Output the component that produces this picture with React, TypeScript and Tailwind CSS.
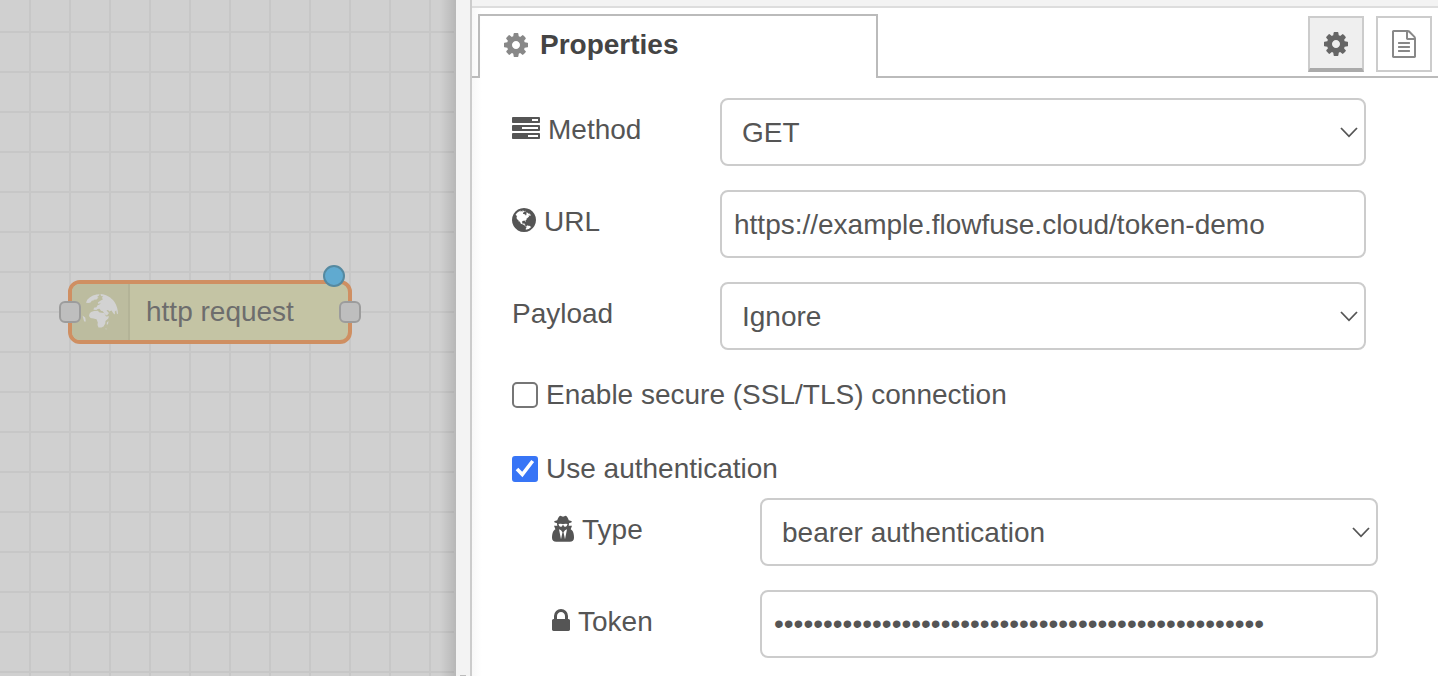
import { useState, type ReactNode } from "react";

const COG =
  "M1024 896q0-106-75-181t-181-75-181 75-75 181 75 181 181 75 181-75 75-181zm512-109v222q0 12-8 23t-20 13l-185 28q-19 54-39 91 35 50 107 138 10 12 10 25t-9 23q-27 37-99 108t-94 71q-12 0-26-9l-138-108q-44 23-91 38-16 136-29 186-7 28-36 28h-222q-14 0-24.5-8.5t-11.5-21.5l-28-184q-49-16-90-37l-141 107q-10 9-25 9-14 0-25-11-126-114-165-168-7-10-7-23 0-12 8-23 15-21 51-66.5t54-70.5q-27-50-41-99l-183-27q-13-2-21-12.5t-8-23.5v-222q0-12 8-23t19-13l186-28q14-46 39-92-40-57-107-138-10-12-10-24 0-10 9-23 26-36 98.5-107.5t94.5-71.5q13 0 26 10l138 107q44-23 91-38 16-136 29-186 7-28 36-28h222q14 0 24.5 8.5t11.5 21.5l28 184q49 16 90 37l142-107q9-9 24-9 13 0 25 10 129 119 165 170 7 8 7 22 0 12-8 23-15 21-51 66.5t-54 70.5q26 50 41 98l183 28q13 2 21 12.5t8 23.5z";

const FILE =
  "M1596 380q28 28 48 76t20 88v1152q0 40-28 68t-68 28h-1344q-40 0-68-28t-28-68v-1600q0-40 28-68t68-28h896q40 0 88 20t76 48zm-444-244v376h376q-10-29-22-41l-313-313q-12-12-41-22zm384 1528v-1024h-416q-40 0-68-28t-28-68v-416h-768v1536h1280zm-1024-864q0-14 9-23t23-9h704q14 0 23 9t9 23v64q0 14-9 23t-23 9h-704q-14 0-23-9t-9-23v-64zm736 224q14 0 23 9t9 23v64q0 14-9 23t-23 9h-704q-14 0-23-9t-9-23v-64q0-14 9-23t23-9h704zm0 256q14 0 23 9t9 23v64q0 14-9 23t-23 9h-704q-14 0-23-9t-9-23v-64q0-14 9-23t23-9h704z";

const TASKS =
  "M1024 1408h640v-128h-640v128zm-384-512h1024v-128h-1024v128zm640-512h384v-128h-384v128zm512 832v256q0 26-19 45t-45 19h-1664q-26 0-45-19t-19-45v-256q0-26 19-45t45-19h1664q26 0 45 19t19 45zm0-512v256q0 26-19 45t-45 19h-1664q-26 0-45-19t-19-45v-256q0-26 19-45t45-19h1664q26 0 45 19t19 45zm0-512v256q0 26-19 45t-45 19h-1664q-26 0-45-19t-19-45v-256q0-26 19-45t45-19h1664q26 0 45 19t19 45z";

const GLOBE =
  "M896 128q209 0 385.5 103t279.5 279.5 103 385.5-103 385.5-279.5 279.5-385.5 103-385.5-103-279.5-279.5-103-385.5 103-385.5 279.5-279.5 385.5-103zm274 521q-2 1-9.5 9.5t-13.5 9.5q2 0 4.5-5t5-11 3.5-7q6-7 22-15 14-6 52-12 34-8 51 11-2-2 9.5-13t14.5-12q3-2 15-4.5t15-7.5l2-22q-12 1-17.5-7t-6.5-21q0 2-6 8 0-7-4.5-8t-11.5 1-9 1q-10-3-15-7.5t-8-16.5-4-15q-2-5-9.5-11t-9.5-10q-1-2-2.5-5.5t-3-6.5-4-5.5-5.5-2.5-7 5-7.5 10-4.5 5q-3-2-6-1.5t-4.5 1-4.5 3-5 3.5q-3 2-8.5 3t-8.5 2q15-5-1-11-10-4-16-3 9-4 7.5-12t-8.5-14h5q-1-4-8.5-8.5t-17.5-8.5-13-6q-8-5-34-9.5t-33-.5q-5 6-4.5 10.5t4 14 3.5 12.5q1 6-5.5 13t-6.5 12q0 7 14 15.5t10 21.5q-3 8-16 16t-16 12q-5 8-1.5 18.5t10.5 16.5q2 2 1.5 4t-3.5 4.5-5.5 4-6.5 3.5l-3 2q-11 5-20.5-6t-13.5-26q-7-25-16-30-23-8-29 1-5-13-41-26-25-9-58-4 6-1 0-15-7-15-19-12 3-6 4-17.5t1-13.5q3-13 12-23 1-1 7-8.5t9.5-13.5.5-6q35 4 50-11 5-5 11.5-17t10.5-17q9-6 14-5.5t14.5 5.5 14.5 5q14 1 15.5-11t-7.5-20q12 1 3-17-4-7-8-9-12-4-27 5-8 4 2 8-1-1-9.5 10.5t-16.5 17.5-16-5q-1-1-5.5-13.5t-9.5-13.5q-8 0-16 15 3-8-11-15t-24-8q19-12-8-27-7-4-20.5-5t-19.5 4q-5 7-5.5 11.5t5 8 10.5 5.5 11.5 4 8.5 3q14 10 8 14-2 1-8.5 3.5t-11.5 4.5-6 4q-3 4 0 14t-2 14q-5-5-9-17.5t-7-16.5q7 9-25 6l-10-1q-4 0-16 2t-20.5 1-13.5-8q-4-8 0-20 1-4 4-2-4-3-11-9.5t-10-8.5q-46 15-94 41 6 1 12-1 5-2 13-6.5t10-5.5q34-14 42-7l5-5q14 16 20 25-7-4-30-1-20 6-22 12 7 12 5 18-4-3-11.5-10t-14.5-11-15-5q-16 0-22 1-146 80-235 222 7 7 12 8 4 1 5 9t2.5 11 11.5-3q9 8 3 19 1-1 44 27 19 17 21 21 3 11-10 18-1-2-9-9t-9-4q-3 5 .5 18.5t10.5 12.5q-7 0-9.5 16t-2.5 35.5-1 23.5l2 1q-3 12 5.5 34.5t21.5 19.5q-13 3 20 43 6 8 8 9 3 2 12 7.5t15 10 10 10.5q4 5 10 22.5t14 23.5q-2 6 9.5 20t10.5 23q-1 0-2.5 1t-2.5 1q3 7 15.5 14t15.5 13q1 3 2 10t3 11 8 2q2-20-24-62-15-25-17-29-3-5-5.5-15.5t-4.5-14.5q2 0 6 1.5t8.5 3.5 7.5 4 2 3q-3 7 2 17.5t12 18.5 17 19 12 13q6 6 14 19.5t0 13.5q9 0 20 10.5t17 19.5q5 8 8 26t5 24q2 7 8.5 13.5t12.5 9.5l16 8 13 7q5 2 18.5 10.5t21.5 11.5q10 4 16 4t14.5-2.5 13.5-3.5q15-2 29 15t21 21q36 19 55 11-2 1 .5 7.5t8 15.5 9 14.5 5.5 8.5q5 6 18 15t18 15q6-4 7-9-3 8 7 20t18 10q14-3 14-32-31 15-49-18 0-1-2.5-5.5t-4-8.5-2.5-8.5 0-7.5 5-3q9 0 10-3.5t-2-12.5-4-13q-1-8-11-20t-12-15q-5 9-16 8t-16-9q0 1-1.5 5.5t-1.5 6.5q-13 0-15-1 1-3 2.5-17.5t3.5-22.5q1-4 5.5-12t7.5-14.5 4-12.5-4.5-9.5-17.5-2.5q-19 1-26 20-1 3-3 10.5t-5 11.5-9 7q-7 3-24 2t-24-5q-13-8-22.5-29t-9.5-37q0-10 2.5-26.5t3-25-5.5-24.5q3-2 9-9.5t10-10.5q2-1 4.5-1.5t4.5 0 4-1.5 3-6q-1-1-4-3-3-3-4-3 7 3 28.5-1.5t27.5 1.5q15 11 22-2 0-1-2.5-9.5t-.5-13.5q5 27 29 9 3 3 15.5 5t17.5 5q3 2 7 5.5t5.5 4.5 5-.5 8.5-6.5q10 14 12 24 11 40 19 44 7 3 11 2t4.5-9.5 0-14-1.5-12.5l-1-8v-18l-1-8q-15-3-18.5-12t1.5-18.5 15-18.5q1-1 8-3.5t15.5-6.5 12.5-8q21-19 15-35 7 0 11-9-1 0-5-3t-7.5-5-4.5-2q9-5 2-16 5-3 7.5-11t7.5-10q9 12 21 2 8-8 1-16 5-7 20.5-10.5t18.5-9.5q7 2 8-2t1-12 3-12q4-5 15-9t13-5l17-11q3-4 0-4 18 2 31-11 10-11-6-20 3-6-3-9.5t-15-5.5q3-1 11.5-.5t10.5-1.5q15-10-7-16-17-5-43 12zm-163 877q206-36 351-189-3-3-12.5-4.5t-12.5-3.5q-18-7-24-8 1-7-2.5-13t-8-9-12.5-8-11-7q-2-2-7-6t-7-5.5-7.5-4.5-8.5-2-10 1l-3 1q-3 1-5.5 2.5t-5.5 3-4 3 0 2.5q-21-17-36-22-5-1-11-5.5t-10.5-7-10-1.5-11.5 7q-5 5-6 15t-2 13q-7-5 0-17.5t2-18.5q-3-6-10.5-4.5t-12 4.5-11.5 8.5-9 6.5-8.5 5.5-8.5 7.5q-3 4-6 12t-5 11q-2-4-11.5-6.5t-9.5-5.5q2 10 4 35t5 38q7 31-12 48-27 25-29 40-4 22 12 26 0 7-8 20.5t-7 21.5q0 6 2 16z";

const SECRET =
  "M704 1536l96-448-96-128-128-64zm256 0l128-640-128 64-96 128zm160-970q-2-4-4-6-10-8-96-8-70 0-167 19-7 2-21 2t-21-2q-97-19-167-19-86 0-96 8-2 2-4 6 2 18 4 27 2 3 7.5 6.5t7.5 10.5q2 4 7.5 20.5t7 20.5 7.5 17 8.5 17 9 14 12 13.5 14 9.5 17.5 8 20.5 4 24.5 2q36 0 59-12.5t32.5-30 14.5-34.5 11.5-29.5 17.5-12.5h12q11 0 17.5 12.5t11.5 29.5 14.5 34.5 32.5 30 59 12.5q13 0 24.5-2t20.5-4 17.5-8 14-9.5 12-13.5 9-14 8.5-17 7.5-17 7-20.5 7.5-20.5q2-7 7.5-10.5t7.5-6.5q2-9 4-27zm416 879q0 121-73 190t-194 69h-874q-121 0-194-69t-73-190q0-61 4.5-118t19-125.5 37.5-123.5 63.5-103.5 93.5-74.5l-90-220h214q-22-64-22-128 0-12 2-32-194-40-194-96 0-57 210-99 17-62 51.5-134t70.5-114q32-37 76-37 30 0 84 31t84 31 84-31 84-31q44 0 76 37 36 42 70.5 114t51.5 134q210 42 210 99 0 56-194 96 7 81-20 160h214l-82 225q63 33 107.5 96.5t65.5 143.5 29 151.5 8 148.5z";

const LOCK =
  "M640 768h512v-192q0-106-75-181t-181-75-181 75-75 181v192zm832 96v576q0 40-28 68t-68 28h-960q-40 0-68-28t-28-68v-576q0-40 28-68t68-28h32v-192q0-184 132-316t316-132 316 132 132 316v192h32q40 0 68 28t28 68z";

function Glyph({ d, box, className }: { d: string; box: string; className: string }) {
  return (
    <svg viewBox={box} className={className} fill="currentColor" aria-hidden="true">
      <path d={d} />
    </svg>
  );
}

function FlowCanvas() {
  return (
    <section
      aria-label="Flow"
      className="relative w-[456px] shrink-0 overflow-hidden bg-[#d0d0d0]"
    >
      <div className="absolute inset-y-0 right-0.5 left-0 bg-[linear-gradient(to_right,#c7c7c7_2px,transparent_2px),linear-gradient(to_bottom,#c7c7c7_2px,transparent_2px)] bg-size-[40px_40px] bg-position-[29px_31px]" />
      <div className="absolute inset-y-0 right-0 w-4 bg-linear-to-r from-transparent to-black/12" />

      <div className="absolute top-[280px] left-[68px] flex h-16 w-[284px] overflow-hidden rounded-xl border-4 border-[#cf8f62] bg-[#c4c4a4]">
        <div className="flex w-[58px] items-center justify-center border-r-2 border-[#b3b397] bg-[#bcbc9f]">
          <svg viewBox="0 0 38 38" className="size-[38px]" fill="#d2d2d2" aria-hidden="true">
            <path d="M5 9.800L6.200 6.800L9 4.300L12 2.600L15.500 1.500L18.500 1.200L18 2.500L16 4L17.500 4.500L15.500 6.500L12.800 6.800L12.300 7.800L11 7.500L9.500 9.500L7.500 10Z" />
            <path d="M19.500 1C25 1.200 30.500 4.500 33.500 9C35.800 12.500 37 16.500 37 21.300L35.800 20.500L35.300 17.500L33.800 18.500L34 21.500L32.500 20.500L30.500 17.500L28.300 18.500L27 17L25.500 17.500L28 20L26 22.500L24 21.500L21.800 18.300L20 17.800L18.500 15.800L16.500 16L15.500 17L12.500 16.800L13 14.800L15.500 14.200L16.300 12.500L18.500 11.500L20 9.800L17.500 11L16.800 9.500L19.800 7.500L22 6.200L20.800 4.800L22.300 3.500L20 3Z" />
            <path d="M10 19L13 18L17 17.800L18 19.200L20.500 19.800L23.200 20L25 23.500L28 23.300L27.300 25.500L24.500 28L24.300 30.500L22.500 33.500L20.500 34.500L17.500 34.500L16.500 32L16.800 29.500L15.500 26.300L12.500 25.500L9.500 25L8 23L8.500 20.800Z" />
            <path d="M25.800 29.500L27.500 28L27 31L25.800 32Z" />
            <path d="M1.500 22.500L4.200 24.500L4.800 28.500L3.200 28.500Z" />
            <path d="M24.200 36L25.200 35.300L25.600 36.500Z" />
          </svg>
        </div>
        <span className="flex items-center pl-4 text-[28px] leading-8 text-[#6d6d6d]">
          http request
        </span>
      </div>
      <span className="absolute top-[301px] left-[59px] size-[22px] rounded-md border-2 border-[#9c9c9c] bg-[#bebebe]" />
      <span className="absolute top-[301px] left-[339px] size-[22px] rounded-md border-2 border-[#9c9c9c] bg-[#bebebe]" />
      <span className="absolute top-[265px] left-[323px] size-[22px] rounded-full border-2 border-[#5589a0] bg-[#60aad0]" />
    </section>
  );
}

function Row({ id, icon, label, children }: { id: string; icon?: ReactNode; label: string; children: ReactNode }) {
  return (
    <div className="flex h-17 items-start">
      <label htmlFor={id} className="flex h-16 w-52 shrink-0 items-center gap-2">
        {icon && <span className="pb-1">{icon}</span>}
        {label}
      </label>
      {children}
    </div>
  );
}

const fieldClass =
  "h-17 w-full min-w-0 rounded-lg border-2 border-[#ccc] bg-white text-[28px] text-[#555] outline-none";

function Select({ id, options }: { id: string; options: string[] }) {
  return (
    <div className="relative min-w-0 flex-1">
      <select id={id} className={`${fieldClass} appearance-none pt-0.5 pr-10 pl-5`}>
        {options.map((o) => (
          <option key={o}>{o}</option>
        ))}
      </select>
      <svg
        viewBox="0 0 18 11"
        className="pointer-events-none absolute top-[29px] right-2 h-[11px] w-[18px]"
        fill="none"
        stroke="#555"
        strokeWidth="1.8"
        aria-hidden="true"
      >
        <path d="M1 1L9 9.300L17 1" />
      </svg>
    </div>
  );
}

function Check({ label, checked, onChange }: { label: string; checked: boolean; onChange: (v: boolean) => void }) {
  return (
    <label className="flex h-8 items-center gap-2">
      <span className="relative flex size-[26px] shrink-0">
        <input
          type="checkbox"
          checked={checked}
          onChange={(e) => onChange(e.target.checked)}
          className="size-[26px] appearance-none rounded-[5px] border-2 border-[#767676] bg-white checked:rounded-[3px] checked:border-[#3875f6] checked:bg-[#3875f6]"
        />
        {checked && (
          <svg
            viewBox="0 0 26 26"
            className="pointer-events-none absolute inset-0 size-[26px]"
            fill="none"
            stroke="#fff"
            strokeWidth="3.600"
            aria-hidden="true"
          >
            <path d="M5 13L10.300 18.500L20.700 5" />
          </svg>
        )}
      </span>
      {label}
    </label>
  );
}

export default function App() {
  const [tls, setTls] = useState(false);
  const [auth, setAuth] = useState(true);
  const [url, setUrl] = useState("https://example.flowfuse.cloud/token-demo");
  const [token, setToken] = useState("x".repeat(50));

  return (
    <div className="flex h-screen overflow-hidden bg-white font-['Liberation_Sans',Arial,sans-serif] text-[28px] leading-8 text-[#555]">
      <FlowCanvas />
      <div className="flex w-4 shrink-0 flex-col items-center justify-end border-r-2 border-[#ccc] bg-[#f3f3f3]">
        <span className="h-px w-1.5 bg-[#bbb]" />
      </div>

      <main className="flex min-w-0 flex-1 flex-col bg-[linear-gradient(to_right,#f8f8f8,#fff_10px)]">
        <div className="h-2 shrink-0 border-b-2 border-[#ddd] bg-[#f3f3f3]" />
        <header className="flex h-[70px] shrink-0 pt-1.5">
          <div className="w-1.5 border-b-2 border-[#bbb]" />
          <button
            type="button"
            className="flex w-[400px] items-center gap-3 border-2 border-b-0 border-[#bbb] pb-1 pl-6 text-left font-bold text-[#444]"
          >
            <Glyph d={COG} box="0 128 1536 1536" className="size-6 text-[#888]" />
            Properties
          </button>
          <div className="flex flex-1 justify-end gap-3 border-b-2 border-[#bbb] pt-0.5 pr-1.5">
            <button
              type="button"
              aria-label="Edit properties"
              className="flex size-14 items-center justify-center border-2 border-b-4 border-[#ccc] border-b-[#aaa] bg-[#efefef] pt-0.5 text-[#666]"
            >
              <Glyph d={COG} box="0 128 1536 1536" className="size-6" />
            </button>
            <button
              type="button"
              aria-label="Description"
              className="flex size-14 items-center justify-center border-2 border-[#ccc] bg-white text-[#888]"
            >
              <Glyph d={FILE} box="128 0 1536 1792" className="h-7 w-6" />
            </button>
          </div>
        </header>

        <form className="flex flex-col pt-5 pl-10" onSubmit={(e) => e.preventDefault()}>
          <div className="flex flex-col gap-6 pr-[72px]">
            <Row id="method" label="Method" icon={<Glyph d={TASKS} box="0 128 1792 1408" className="h-[22px] w-7" />}>
              <Select id="method" options={["GET", "POST", "PUT", "DELETE"]} />
            </Row>
            <Row id="url" label="URL" icon={<Glyph d={GLOBE} box="128 128 1536 1536" className="size-6" />}>
              <input
                id="url"
                type="text"
                value={url}
                onChange={(e) => setUrl(e.target.value)}
                className={`${fieldClass} flex-1 px-3 pt-0.5`}
              />
            </Row>
            <Row id="payload" label="Payload">
              <Select id="payload" options={["Ignore", "Append to query-string parameters"]} />
            </Row>
          </div>

          <div className="flex flex-col gap-[42px] pt-[29px]">
            <Check label="Enable secure (SSL/TLS) connection" checked={tls} onChange={setTls} />
            <Check label="Use authentication" checked={auth} onChange={setAuth} />
          </div>

          <div className="flex flex-col gap-6 pt-[13px] pr-15 pl-10">
            <Row id="type" label="Type" icon={<Glyph d={SECRET} box="128 0 1408 1704" className="h-[27px] w-[22px]" />}>
              <Select id="type" options={["bearer authentication", "basic authentication"]} />
            </Row>
            <Row id="token" label="Token" icon={<Glyph d={LOCK} box="320 128 1152 1408" className="h-[22px] w-[18px]" />}>
              <input
                id="token"
                type="password"
                value={token}
                onChange={(e) => setToken(e.target.value)}
                className={`${fieldClass} flex-1 px-3`}
              />
            </Row>
          </div>
        </form>
      </main>
    </div>
  );
}
